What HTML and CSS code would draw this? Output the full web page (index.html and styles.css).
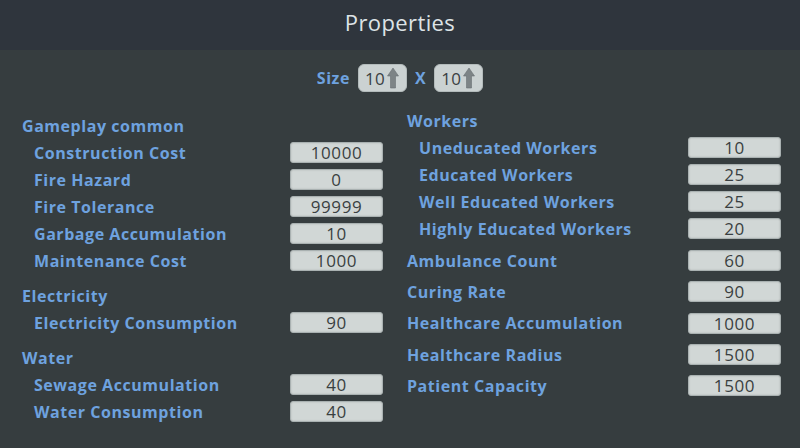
FILE: index.html
```html
<!DOCTYPE html>
<html>
<head>
<meta charset="utf-8">
<link rel="stylesheet" href="styles.css">
</head>
<body>
<header class="titlebar"><h1 class="title">Properties</h1></header>
<div class="size-row">
  <span class="lbl">Size</span>
  <span class="spin">10<svg class="arrow" viewBox="0 0 12 22" width="12" height="22"><path d="M6 1 L11.5 9 L8.5 9 L8.5 21 L3.5 21 L3.5 9 L0.5 9 Z" fill="#7d8486" stroke="#6a7173" stroke-width="0.6"/></svg></span>
  <span class="lbl">X</span>
  <span class="spin">10<svg class="arrow" viewBox="0 0 12 22" width="12" height="22"><path d="M6 1 L11.5 9 L8.5 9 L8.5 21 L3.5 21 L3.5 9 L0.5 9 Z" fill="#7d8486" stroke="#6a7173" stroke-width="0.6"/></svg></span>
</div>
<main class="cols">
  <section class="col left">
    <div class="group">
      <div class="head">Gameplay common</div>
      <div class="row sub"><span class="lbl">Construction Cost</span><span class="box">10000</span></div>
      <div class="row sub"><span class="lbl">Fire Hazard</span><span class="box">0</span></div>
      <div class="row sub"><span class="lbl">Fire Tolerance</span><span class="box">99999</span></div>
      <div class="row sub"><span class="lbl">Garbage Accumulation</span><span class="box">10</span></div>
      <div class="row sub"><span class="lbl">Maintenance Cost</span><span class="box">1000</span></div>
    </div>
    <div class="group">
      <div class="head">Electricity</div>
      <div class="row sub"><span class="lbl">Electricity Consumption</span><span class="box">90</span></div>
    </div>
    <div class="group">
      <div class="head">Water</div>
      <div class="row sub"><span class="lbl">Sewage Accumulation</span><span class="box">40</span></div>
      <div class="row sub"><span class="lbl">Water Consumption</span><span class="box">40</span></div>
    </div>
  </section>
  <section class="col right">
    <div class="group">
      <div class="head">Workers</div>
      <div class="row sub"><span class="lbl">Uneducated Workers</span><span class="box">10</span></div>
      <div class="row sub"><span class="lbl">Educated Workers</span><span class="box">25</span></div>
      <div class="row sub"><span class="lbl">Well Educated Workers</span><span class="box">25</span></div>
      <div class="row sub"><span class="lbl">Highly Educated Workers</span><span class="box">20</span></div>
    </div>
    <div class="tall">
      <div class="row"><span class="lbl">Ambulance Count</span><span class="box">60</span></div>
      <div class="row"><span class="lbl">Curing Rate</span><span class="box">90</span></div>
      <div class="row"><span class="lbl">Healthcare Accumulation</span><span class="box">1000</span></div>
      <div class="row"><span class="lbl">Healthcare Radius</span><span class="box">1500</span></div>
      <div class="row"><span class="lbl">Patient Capacity</span><span class="box">1500</span></div>
    </div>
  </section>
</main>
</body>
</html>
```
FILE: styles.css
```css
html, body {
  margin: 0;
  padding: 0;
}
body {
  width: 800px;
  height: 448px;
  overflow: hidden;
  background: #363d3f;
  font-family: "Open Sans", "DejaVu Sans", sans-serif;
}
.titlebar {
  height: 50px;
  background: #2f353d;
  display: flex;
  align-items: center;
  justify-content: center;
}
.title {
  margin: 0;
  font-size: 22px;
  font-weight: 400;
  color: #dde3e6;
  letter-spacing: 0.4px;
  position: relative;
  top: -3px;
}
.lbl, .head {
  color: #6ea2df;
  font-weight: 700;
  font-size: 16px;
  letter-spacing: 0.55px;
}
.size-row {
  display: flex;
  justify-content: center;
  align-items: center;
  gap: 8px;
  margin-top: 14px;
  height: 28px;
}
.spin {
  width: 49px;
  height: 28px;
  box-sizing: border-box;
  background: #cbd2d2;
  border: 1px solid #b3bbbb;
  border-radius: 6px;
  display: flex;
  align-items: center;
  justify-content: flex-end;
  padding-right: 7px;
  gap: 2px;
  font-size: 17px;
  letter-spacing: 0.3px;
  color: #3a4042;
}
.arrow { display: block; }
.cols {
  display: grid;
  grid-template-columns: 361px 374px;
  column-gap: 24px;
  padding-left: 22px;
}
.left { padding-top: 20px; }
.right { padding-top: 15px; }
.group + .group { margin-top: 8px; }
.head, .row {
  height: 27px;
  display: flex;
  align-items: center;
}
.row { justify-content: space-between; }
.sub { padding-left: 12px; }
.box {
  width: 93px;
  height: 21px;
  box-sizing: border-box;
  background: #d1d7d6;
  border: 1px solid #a9b1b1;
  border-radius: 3px;
  display: flex;
  align-items: center;
  justify-content: center;
  font-size: 17px;
  letter-spacing: 0.6px;
  color: #3a3f41;
  box-shadow: inset 0 0 2px rgba(0,0,0,0.15);
}
.tall { margin-top: 3px; }
.tall .row { height: 31.3px; }
```
